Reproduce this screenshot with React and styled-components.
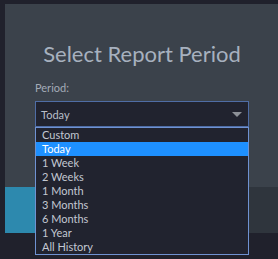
import React, { useState } from "react";
import styled, { createGlobalStyle } from "styled-components";

const GlobalStyle = createGlobalStyle`
    html, body {
        margin: 0;
        padding: 0;
        background: #20212c;
        overflow: hidden;
    }
    body {
        font-family: Lato, "Liberation Sans", sans-serif;
    }
`;

const Page = styled.div`
    width: 278px;
    height: 259px;
    padding: 4px 0 0 5px;
    box-sizing: border-box;
    background: #20212c;
    overflow: hidden;
`;

const Modal = styled.div`
    width: 274px;
    display: flex;
    flex-direction: column;
`;

const ModalBody = styled.div`
    height: 183px;
    box-sizing: border-box;
    padding: 37px 30px 0 30px;
    background: #3b424b;
    display: flex;
    flex-direction: column;
`;

const Title = styled.h2`
    margin: 0;
    font-size: 22px;
    font-weight: 400;
    line-height: 26px;
    color: #a7b1bf;
    text-align: center;
`;

const Label = styled.label`
    margin-top: 14px;
    font-size: 11px;
    line-height: 13px;
    color: #a3abb7;
`;

const SelectWrap = styled.div`
    position: relative;
    margin-top: 7px;
`;

const SelectBox = styled.div`
    height: 26px;
    box-sizing: border-box;
    border: 1px solid #4f6da5;
    background: #21232f;
    display: flex;
    align-items: center;
    justify-content: space-between;
    padding: 0 6px 0 5px;
    font-size: 11px;
    color: #b9bec8;
`;

const Caret = styled.span`
    width: 0;
    height: 0;
    border-left: 5px solid transparent;
    border-right: 5px solid transparent;
    border-top: 5px solid #8d9198;
    margin-top: 1px;
`;

const OptionList = styled.ul`
    position: absolute;
    left: 0;
    right: 0;
    top: 26px;
    margin: 0;
    padding: 0;
    list-style: none;
    background: #21232f;
    border: 1px solid #6f92d2;
    z-index: 10;
`;

const Option = styled.li`
    height: 14px;
    line-height: 14px;
    padding: 0 6px;
    font-size: 11px;
    color: ${(p) => (p.$active ? "#ffffff" : "#c3c8d2")};
    background: ${(p) => (p.$active ? "#1e90ff" : "transparent")};
    white-space: nowrap;
`;

const Footer = styled.div`
    height: 46px;
    background: #2f353d;
    display: flex;
`;

const PrimaryButton = styled.button`
    width: 120px;
    border: none;
    background: #2d89ae;
    color: #fff;
    font-family: inherit;
`;

const periods = [
    "Custom",
    "Today",
    "1 Week",
    "2 Weeks",
    "1 Month",
    "3 Months",
    "6 Months",
    "1 Year",
    "All History",
];

export default function App() {
    const [period] = useState("Today");

    return (
        <Page>
            <GlobalStyle />
            <Modal>
                <ModalBody>
                    <Title>Select Report Period</Title>
                    <Label>Period:</Label>
                    <SelectWrap>
                        <SelectBox>
                            {period}
                            <Caret />
                        </SelectBox>
                        <OptionList>
                            {periods.map((p) => (
                                <Option key={p} $active={p === period}>{p}</Option>
                            ))}
                        </OptionList>
                    </SelectWrap>
                </ModalBody>
                <Footer>
                    <PrimaryButton>Run</PrimaryButton>
                </Footer>
            </Modal>
        </Page>
    );
}
